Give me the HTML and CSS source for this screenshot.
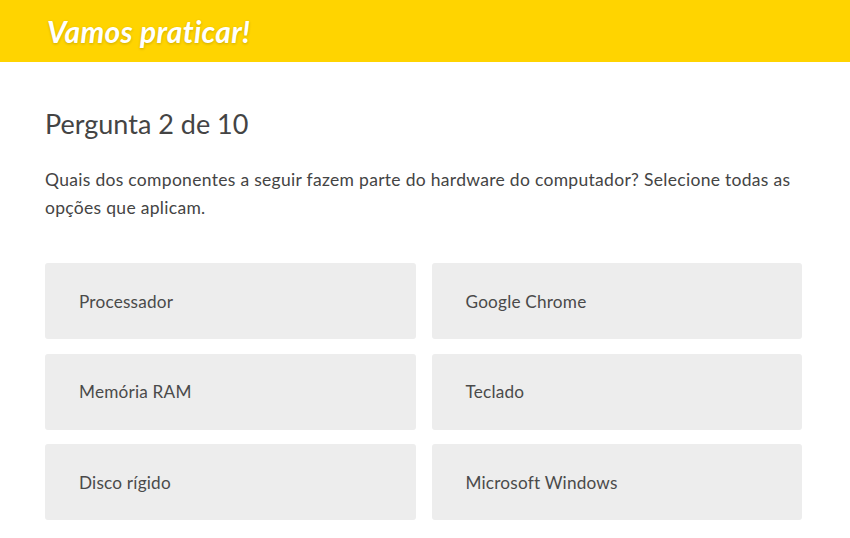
FILE: index.html
```html
<!DOCTYPE html>
<html lang="pt">
<head>
<meta charset="utf-8">
<link rel="stylesheet" href="styles.css">
</head>
<body>
<header class="topbar"><h1 class="brand">Vamos praticar!</h1></header>
<main class="content">
  <h2 class="q-count">Pergunta 2 de 10</h2>
  <p class="q-text">Quais dos componentes a seguir fazem parte do hardware do computador? Selecione todas as opções que aplicam.</p>
  <div class="options">
    <div class="option">Processador</div>
    <div class="option">Google Chrome</div>
    <div class="option">Memória RAM</div>
    <div class="option">Teclado</div>
    <div class="option">Disco rígido</div>
    <div class="option">Microsoft Windows</div>
  </div>
</main>
</body>
</html>
```
FILE: styles.css
```css
html, body { margin: 0; padding: 0; background: #fff; }
body { font-family: Lato, "Open Sans", sans-serif; color: #444; }
.topbar {
  background: #ffd400;
  height: 62px;
  display: flex;
  align-items: center;
  padding-left: 47px;
}
.brand {
  margin: 0;
  color: #fff;
  font-style: italic;
  font-weight: 700;
  font-size: 30px;
  letter-spacing: 0.3px;
  text-shadow: 0 1px 3px rgba(0,0,0,0.2);
}
.content { padding: 44px 48px 0 45px; }
.q-count {
  margin: 0;
  font-weight: 400;
  font-size: 27px;
  line-height: 36px;
  color: #444;
}
.q-text {
  margin: 24px 0 0;
  font-size: 17.5px;
  letter-spacing: 0.3px;
  line-height: 28px;
  color: #444;
}
.options {
  margin-top: 41px;
  display: grid;
  grid-template-columns: 1fr 1fr;
  column-gap: 16px;
  row-gap: 14.5px;
}
.option {
  background: #ededed;
  border-radius: 3px;
  height: 76px;
  display: flex;
  align-items: center;
  padding-left: 34px;
  font-size: 17.2px;
  letter-spacing: 0.2px;
  color: #4a4a4a;
}
```
